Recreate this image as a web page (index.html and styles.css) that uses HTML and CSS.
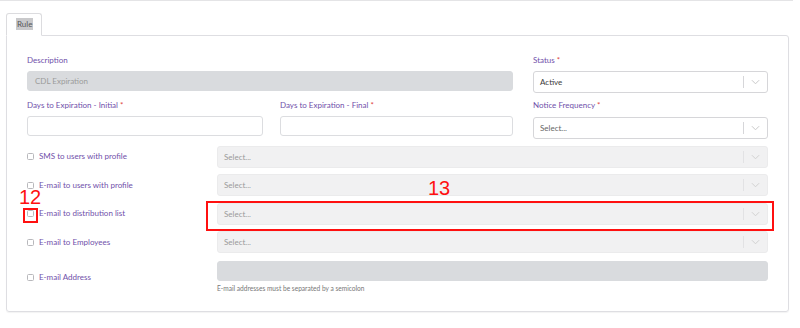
FILE: index.html
```html
<!DOCTYPE html>
<html>
<head>
<meta charset="utf-8">
<link rel="stylesheet" href="styles.css">
</head>
<body>
<div class="page">
  <div class="tabs">
    <div class="tab"><span class="tab-text">Rule</span></div>
  </div>
  <div class="panel">
    <div class="top">
      <div class="left">
        <div class="field">
          <div class="label">Description</div>
          <div class="input disabled">CDL Expiration</div>
        </div>
        <div class="pair">
          <div class="field">
            <div class="label">Days to Expiration - Initial <span class="req">*</span></div>
            <div class="input"></div>
          </div>
          <div class="field">
            <div class="label">Days to Expiration - Final <span class="req">*</span></div>
            <div class="input"></div>
          </div>
        </div>
      </div>
      <div class="right">
        <div class="field">
          <div class="label">Status <span class="req">*</span></div>
          <div class="select">
            <span class="value dark">Active</span>
            <span class="sep"></span>
            <svg class="chev" viewBox="0 0 10 6" width="9" height="6"><path d="M1 1l4 4 4-4" fill="none" stroke="#c8c8c8" stroke-width="1.1"/></svg>
          </div>
        </div>
        <div class="field">
          <div class="label">Notice Frequency <span class="req">*</span></div>
          <div class="select">
            <span class="value">Select...</span>
            <span class="sep"></span>
            <svg class="chev" viewBox="0 0 10 6" width="9" height="6"><path d="M1 1l4 4 4-4" fill="none" stroke="#c8c8c8" stroke-width="1.1"/></svg>
          </div>
        </div>
      </div>
    </div>
    <div class="rows">
      <div class="row">
        <label class="check"><span class="box"></span>SMS to users with profile</label>
        <div class="select off"><span class="value">Select...</span><span class="sep"></span><svg class="chev" viewBox="0 0 10 6" width="9" height="6"><path d="M1 1l4 4 4-4" fill="none" stroke="#d0d0d0" stroke-width="1.1"/></svg></div>
      </div>
      <div class="row">
        <label class="check"><span class="box"></span>E-mail to users with profile</label>
        <div class="select off"><span class="value">Select...</span><span class="sep"></span><svg class="chev" viewBox="0 0 10 6" width="9" height="6"><path d="M1 1l4 4 4-4" fill="none" stroke="#d0d0d0" stroke-width="1.1"/></svg></div>
      </div>
      <div class="row">
        <label class="check"><span class="box"></span>E-mail to distribution list</label>
        <div class="select off"><span class="value">Select...</span><span class="sep"></span><svg class="chev" viewBox="0 0 10 6" width="9" height="6"><path d="M1 1l4 4 4-4" fill="none" stroke="#d0d0d0" stroke-width="1.1"/></svg></div>
      </div>
      <div class="row">
        <label class="check"><span class="box"></span>E-mail to Employees</label>
        <div class="select off"><span class="value">Select...</span><span class="sep"></span><svg class="chev" viewBox="0 0 10 6" width="9" height="6"><path d="M1 1l4 4 4-4" fill="none" stroke="#d0d0d0" stroke-width="1.1"/></svg></div>
      </div>
      <div class="row email">
        <label class="check"><span class="box"></span>E-mail Address</label>
        <div>
          <div class="input grey"></div>
          <div class="help">E-mail addresses must be separated by a semicolon</div>
        </div>
      </div>
    </div>
  </div>
  <div class="mark mark12"></div>
  <div class="num num12">12</div>
  <div class="mark mark13"></div>
  <div class="num num13">13</div>
</div>
</body>
</html>
```
FILE: styles.css
```css
html, body {
  margin: 0;
  padding: 0;
  background: #fff;
}
body {
  font-family: Lato, "Open Sans", sans-serif;
  font-size: 8px;
}
.page {
  position: relative;
  width: 793px;
  height: 328px;
  border-top: 1px solid #e4e4e6;
  box-sizing: border-box;
}
.tabs {
  display: flex;
  padding-left: 6px;
  margin-top: 11.5px;
  position: relative;
  z-index: 1;
}
.tab {
  width: 36px;
  height: 23px;
  box-sizing: border-box;
  border: 1px solid #dcdcdf;
  border-bottom: 1px solid #fff;
  border-radius: 3px 3px 0 0;
  background: #fff;
  display: flex;
  align-items: center;
  padding-left: 9px;
  margin-bottom: -1px;
}
.tab-text {
  background: #c9c9cb;
  color: #555;
  line-height: 12.5px;
  padding: 0 1px;
}
.panel {
  margin-left: 6px;
  width: 783px;
  box-sizing: border-box;
  border: 1px solid #dedee2;
  border-radius: 0 3px 3px 3px;
  box-shadow: 0 1px 1px rgba(0,0,0,0.05);
  padding: 19px 20px 18px 20px;
}
.top {
  display: grid;
  grid-template-columns: 486px 235px;
  column-gap: 20px;
}
.pair {
  display: grid;
  grid-template-columns: 236px 233px;
  column-gap: 17px;
}
.field { margin-bottom: 7px; }
.left .field:first-child { margin-bottom: 8.5px; }
.label {
  color: #7050aa;
  line-height: 11px;
  margin-bottom: 5.5px;
  white-space: nowrap;
}
.req { color: #e0443e; }
.input {
  height: 20px;
  box-sizing: border-box;
  border: 1px solid #dcdde0;
  border-radius: 3px;
  background: #fff;
}
.input.disabled {
  background: #d9dbde;
  border-color: #d9dbde;
  color: #9b9b9b;
  padding-left: 7px;
  display: flex;
  align-items: center;
}
.input.grey {
  background: #d9dbde;
  border-color: #d9dbde;
}
.select {
  height: 22px;
  box-sizing: border-box;
  border: 1px solid #d6d6d9;
  border-radius: 3px;
  background: #fff;
  display: flex;
  align-items: center;
  padding-left: 6px;
}
.select .value {
  flex: 1;
  color: #666;
}
.select .value.dark { color: #3a3a3a; }
.sep {
  width: 1px;
  height: 12px;
  background: #d6d6d9;
}
.chev {
  margin: 0 7px 0 7px;
}
.select.off {
  background: #f1f1f2;
  border-color: #ebebec;
}
.select.off .value { color: #9a9a9a; }
.select.off .sep { background: #e2e2e4; }
.rows {
  display: flex;
  flex-direction: column;
  gap: 6.6px;
}
.row {
  display: grid;
  grid-template-columns: 190px 551px;
  align-items: center;
}
.row.email {
  align-items: start;
  margin-top: 1.4px;
}
.row.email .check { margin-top: 10.5px; }
.check {
  display: flex;
  align-items: center;
  color: #7050aa;
  line-height: 11px;
}
.box {
  width: 7px;
  height: 7px;
  border: 1px solid #b8b8bc;
  border-radius: 1.5px;
  box-sizing: border-box;
  margin-right: 5px;
  background: #fff;
}
.help {
  margin-top: 3px;
  font-size: 6.6px;
  line-height: 9px;
  color: #777;
}
.mark {
  position: absolute;
  border: 2px solid #ff1010;
  box-sizing: border-box;
}
.mark12 {
  left: 23px;
  top: 207px;
  width: 15px;
  height: 15px;
}
.mark13 {
  left: 205.5px;
  top: 199.5px;
  width: 568px;
  height: 30px;
}
.num {
  position: absolute;
  color: #ff1010;
  font-family: "Liberation Sans", sans-serif;
  font-size: 20px;
  line-height: 20px;
}
.num12 { left: 19px; top: 186px; }
.num13 { left: 428px; top: 177px; }
```
